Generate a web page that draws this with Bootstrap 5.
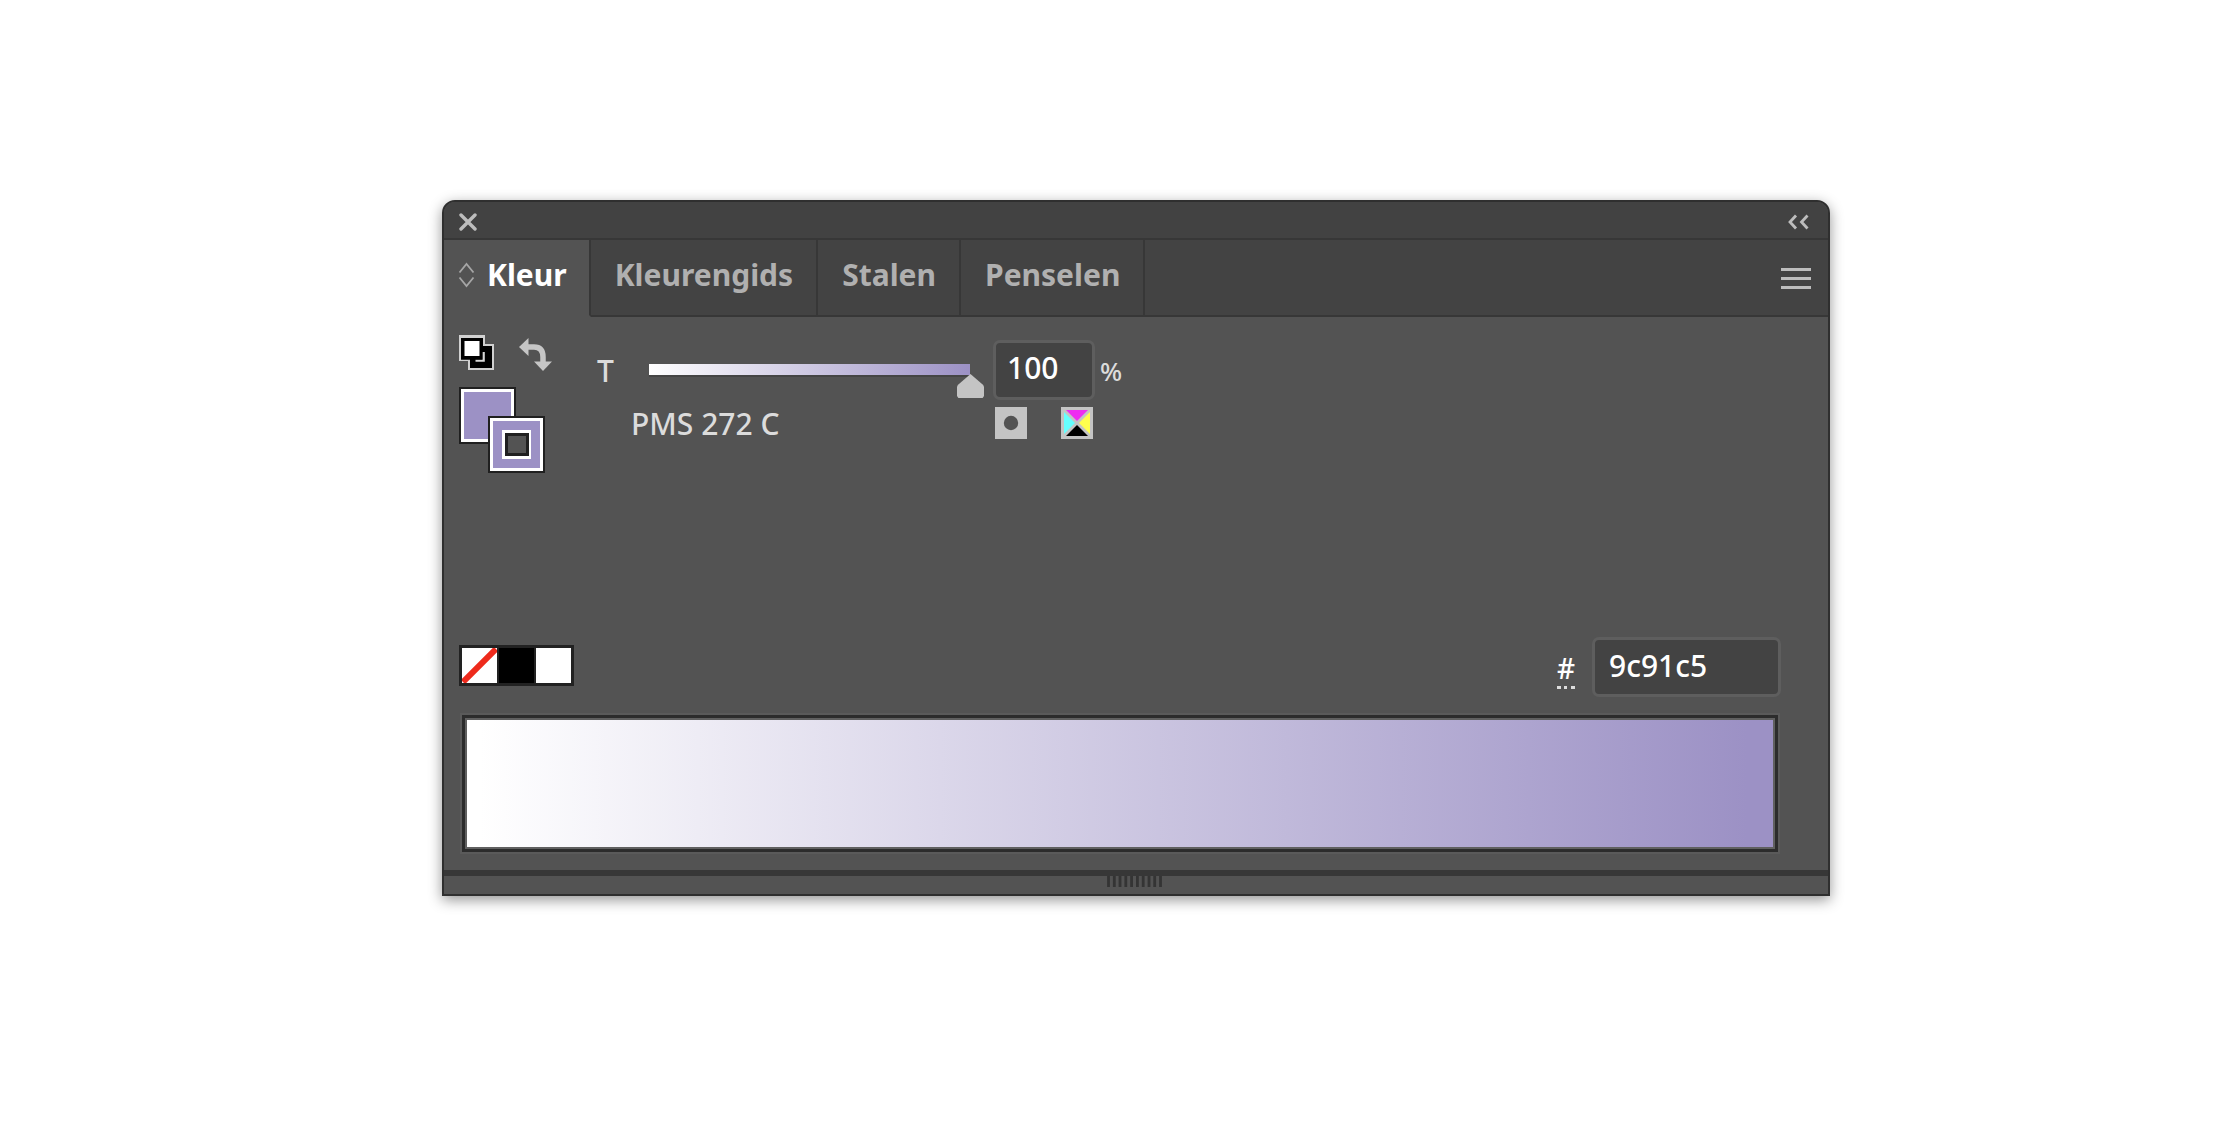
<!DOCTYPE html>
<html lang="nl">
<head>
<meta charset="utf-8">
<meta name="viewport" content="width=device-width, initial-scale=1">
<title>Kleur</title>
<link href="https://cdn.jsdelivr.net/npm/bootstrap@5.3.0/dist/css/bootstrap.min.css" rel="stylesheet">
<style>
  body { background: #fff; font-family: "Noto Sans", sans-serif; font-size: 30px; font-weight: 500; line-height: 40px; color: #dcdcdc; padding: 200px 390px 60px 442px; }
  button { background: none; border: 0; padding: 0; color: inherit; }
  svg { display: block; }
  .panel { background: #535353; border: 2px solid #2f2f2f; border-radius: 13px 13px 0 0; box-shadow: 0 4px 14px rgba(0,0,0,.42); }
  .titlebar { height: 38px; padding: 3px 19px 0 15px; background: #424242; border-bottom: 2px solid #373737; border-radius: 11px 11px 0 0; color: #bdbdbd; }
  .tabstrip { height: 77px; }
  .tabstrip .nav-link { font-size: 30px; font-weight: 700; line-height: 40px; color: #b0b0b0; background: #434343; border-radius: 0; border-right: 2px solid #373737; border-bottom: 2px solid #373737; padding: 0 23px 6px 24px; }
  .tabstrip .nav-link.active { color: #fff; background: #535353; border-bottom-color: #535353; padding: 0 22px 6px 14px; }
  .tab-rest { background: #434343; border-bottom: 2px solid #373737; padding: 2px 17px 0 0; color: #bdbdbd; }
  .controls { min-height: 320px; padding: 18px 15px 0; }
  .tools { width: 138px; }
  .tool-row { gap: 25px; margin-bottom: 16px; }
  .mixer { padding-top: 5px; }
  .tint-label { width: 38px; padding-top: 2px; }
  .tint { appearance: none; -webkit-appearance: none; width: 349px; height: 34px; margin: 24px 9px 0 0; background: linear-gradient(90deg, #fff, #9c91c5) 14px 0 / 321px 11px no-repeat, linear-gradient(#454545, #454545) 14px 11px / 321px 2px no-repeat; }
  .tint::-webkit-slider-runnable-track { height: 34px; background: none; }
  .tint::-webkit-slider-thumb { -webkit-appearance: none; width: 27px; height: 24px; margin-top: 10px; background: #c4c4c4; clip-path: polygon(50% 0, 97% 46%, 100% 54%, 100% 92%, 95% 100%, 5% 100%, 0 92%, 0 54%, 3% 46%); }
  .entry { height: 60px; background: #434343; border: 3px solid #5e5e5e; border-radius: 7px; color: #fff; padding: 0 0 6px 11px; font-size: 30px; font-weight: 500; }
  .entry-tint { width: 102px; }
  .entry-hex { width: 189px; padding: 0 0 3px 14px; }
  .percent { font-size: 26px; margin-left: 5px; padding-top: 2px; }
  .color-name { width: 398px; padding: 3px 0 0 34px; }
  .mode-row { padding-top: 1px; }
  .mode-row button + button { margin-left: 34px; }
  .hex-row { padding: 0 47px 0 15px; }
  .quick { background: #222; padding: 3px; gap: 2px; margin-bottom: 4px; }
  .quick button { width: 35px; height: 35px; }
  .hash { color: #fff; font-size: 28px; line-height: 26px; padding-bottom: 5px; border-bottom: 3px dotted #dcdcdc; margin: 18px 17px 0 0; }
  .ramp { height: 137px; margin: 18px 50px 18px 18px; border: 3px solid #2c2c2c; padding: 2px; background: linear-gradient(90deg, #fff 1%, #9c91c5 98%) content-box, #606060; outline: 2px solid #5a5a5a; }
  .grip { height: 24px; border-top: 6px solid #373737; padding-right: 3px; }
  .grip-lines { width: 55px; height: 12px; }
</style>
<script src="https://cdn.jsdelivr.net/npm/bootstrap@5.3.0/dist/js/bootstrap.bundle.min.js"></script>
</head>
<body>
<main class="panel w-100">
  <header class="titlebar d-flex justify-content-between align-items-center">
    <button type="button" aria-label="Sluiten"><svg width="18" height="18" viewBox="0 0 18 18"><path d="M2 2 16 16M16 2 2 16" stroke="currentColor" stroke-width="3.4" stroke-linecap="round"/></svg></button>
    <button type="button" aria-label="Samenvouwen"><svg width="21" height="16" viewBox="0 0 21 16" fill="none"><path d="M8 1.500 2 8l6 6.500M19.500 1.500 13.500 8l6 6.500" stroke="currentColor" stroke-width="2.800"/></svg></button>
  </header>

  <div class="tabstrip d-flex align-items-stretch">
    <div class="nav flex-nowrap" role="tablist">
      <button class="nav-link active d-flex align-items-center" type="button" role="tab" aria-selected="true">
        <svg class="me-2" width="17" height="26" viewBox="0 0 17 26" fill="none"><path d="M1.500 10.500 8.500 2l7 8.500M1.500 15.500l7 8.500 7-8.500" stroke="#a6a6a6" stroke-width="1.800"/></svg>
        <span class="ps-1">Kleur</span>
      </button>
      <button class="nav-link" type="button" role="tab">Kleurengids</button>
      <button class="nav-link" type="button" role="tab">Stalen</button>
      <button class="nav-link" type="button" role="tab">Penselen</button>
    </div>
    <div class="tab-rest flex-grow-1 d-flex justify-content-end align-items-center">
      <button type="button" aria-label="Menu"><svg width="30" height="23" viewBox="0 0 30 23"><path d="M0 2.500h30M0 11.500h30M0 20.500h30" stroke="currentColor" stroke-width="3"/></svg></button>
    </div>
  </div>

  <section class="controls d-flex align-items-start">
    <div class="tools flex-shrink-0">
      <div class="tool-row d-flex">
        <button type="button" aria-label="Standaardvlak en -lijn"><svg width="35" height="36" viewBox="0 0 35 36"><path d="M0 0h26v9h9v26H9v-9H0z" fill="#d0d0d0"/><path d="M2 3h22v8h9v22H11v-9H2z" fill="#000"/><path d="M5.500 6h15v15h-15z" fill="#fff"/><path d="M24.500 17v8.500H16.500" stroke="#d8d8d8" stroke-width="2.600" fill="none"/><path d="M22.300 3v20.500H2" stroke="#000" stroke-width="2.600" fill="none"/></svg></button>
        <button type="button" aria-label="Vlak en lijn omwisselen"><svg width="34" height="36" viewBox="0 0 34 36"><path d="M9.500 3v18L0 12z" fill="#c6c6c6"/><path d="M8 12h7q9 0 9 10v6" stroke="#c6c6c6" stroke-width="5.500" fill="none"/><path d="M15 26.500h18L24 36z" fill="#c6c6c6"/></svg></button>
      </div>
      <button type="button" aria-label="Vlak en lijn"><svg width="87" height="86" viewBox="0 0 87 86"><path d="M0 0h57v57H0z" fill="#202020"/><path d="M2 2h53v53H2z" fill="#fff"/><path d="M5 5h47v47H5z" fill="#9c91c5"/><path d="M29 29h57v57H29z" fill="#202020"/><path d="M31 31h53v53H31z" fill="#fff"/><path d="M34 34h47v47H34z" fill="#9c91c5"/><path d="M43 43h29v29H43z" fill="#fff"/><path d="M46 46h24v23H46z" fill="#202020"/><path d="M49 49h18v17H49z" fill="#535353"/></svg></button>
    </div>

    <div class="mixer flex-shrink-0">
      <div class="d-flex align-items-center">
        <label class="tint-label" for="tint">T</label>
        <input class="tint align-self-start" type="range" id="tint" min="0" max="100" value="100">
        <input class="entry entry-tint" type="text" id="tint-value" value="100" aria-label="Tint">
        <label class="percent" for="tint-value">%</label>
      </div>
      <div class="mode-row d-flex align-items-center">
        <span class="color-name">PMS 272 C</span>
        <button type="button" aria-label="Steunkleur"><svg width="32" height="32" viewBox="0 0 32 32"><path d="M0 0h32v32H0z" fill="#c4c4c4"/><circle cx="16" cy="16" r="7.200" fill="#535353"/></svg></button>
        <button type="button" aria-label="Proceskleur"><svg width="32" height="32" viewBox="0 0 32 32"><path d="M0 0h32v32H0z" fill="#c4c4c4"/><path d="M5 3h22L16 14z" fill="#ee2df0"/><path d="M3 5v22l11-11z" fill="#6ff"/><path d="M29 5v22L18 16z" fill="#ffff4d"/><path d="M5 29h22L16 18z" fill="#000"/></svg></button>
      </div>
    </div>
  </section>

  <section class="hex-row d-flex align-items-center justify-content-between">
    <div class="quick d-flex">
      <button class="bg-white" type="button" aria-label="Geen"><svg width="35" height="35" viewBox="0 0 35 35"><path d="M1 34 34 1" stroke="#ee2a1c" stroke-width="6"/></svg></button>
      <button class="bg-black" type="button" aria-label="Zwart"></button>
      <button class="bg-white" type="button" aria-label="Wit"></button>
    </div>
    <div class="d-flex align-items-start">
      <label class="hash" for="hex">#</label>
      <input class="entry entry-hex" type="text" id="hex" value="9c91c5">
    </div>
  </section>

  <div class="ramp" role="img" aria-label="Tintspectrum"></div>

  <footer class="grip d-flex justify-content-center">
    <svg class="grip-lines" viewBox="0 0 55 12"><path d="M1.500 0v11M7.300 0v11M13 0v11M18.800 0v11M24.600 0v11M30.400 0v11M36.200 0v11M42 0v11M47.700 0v11M53.500 0v11" stroke="#343434" stroke-width="2.800"/></svg>
  </footer>
</main>
</body>
</html>
